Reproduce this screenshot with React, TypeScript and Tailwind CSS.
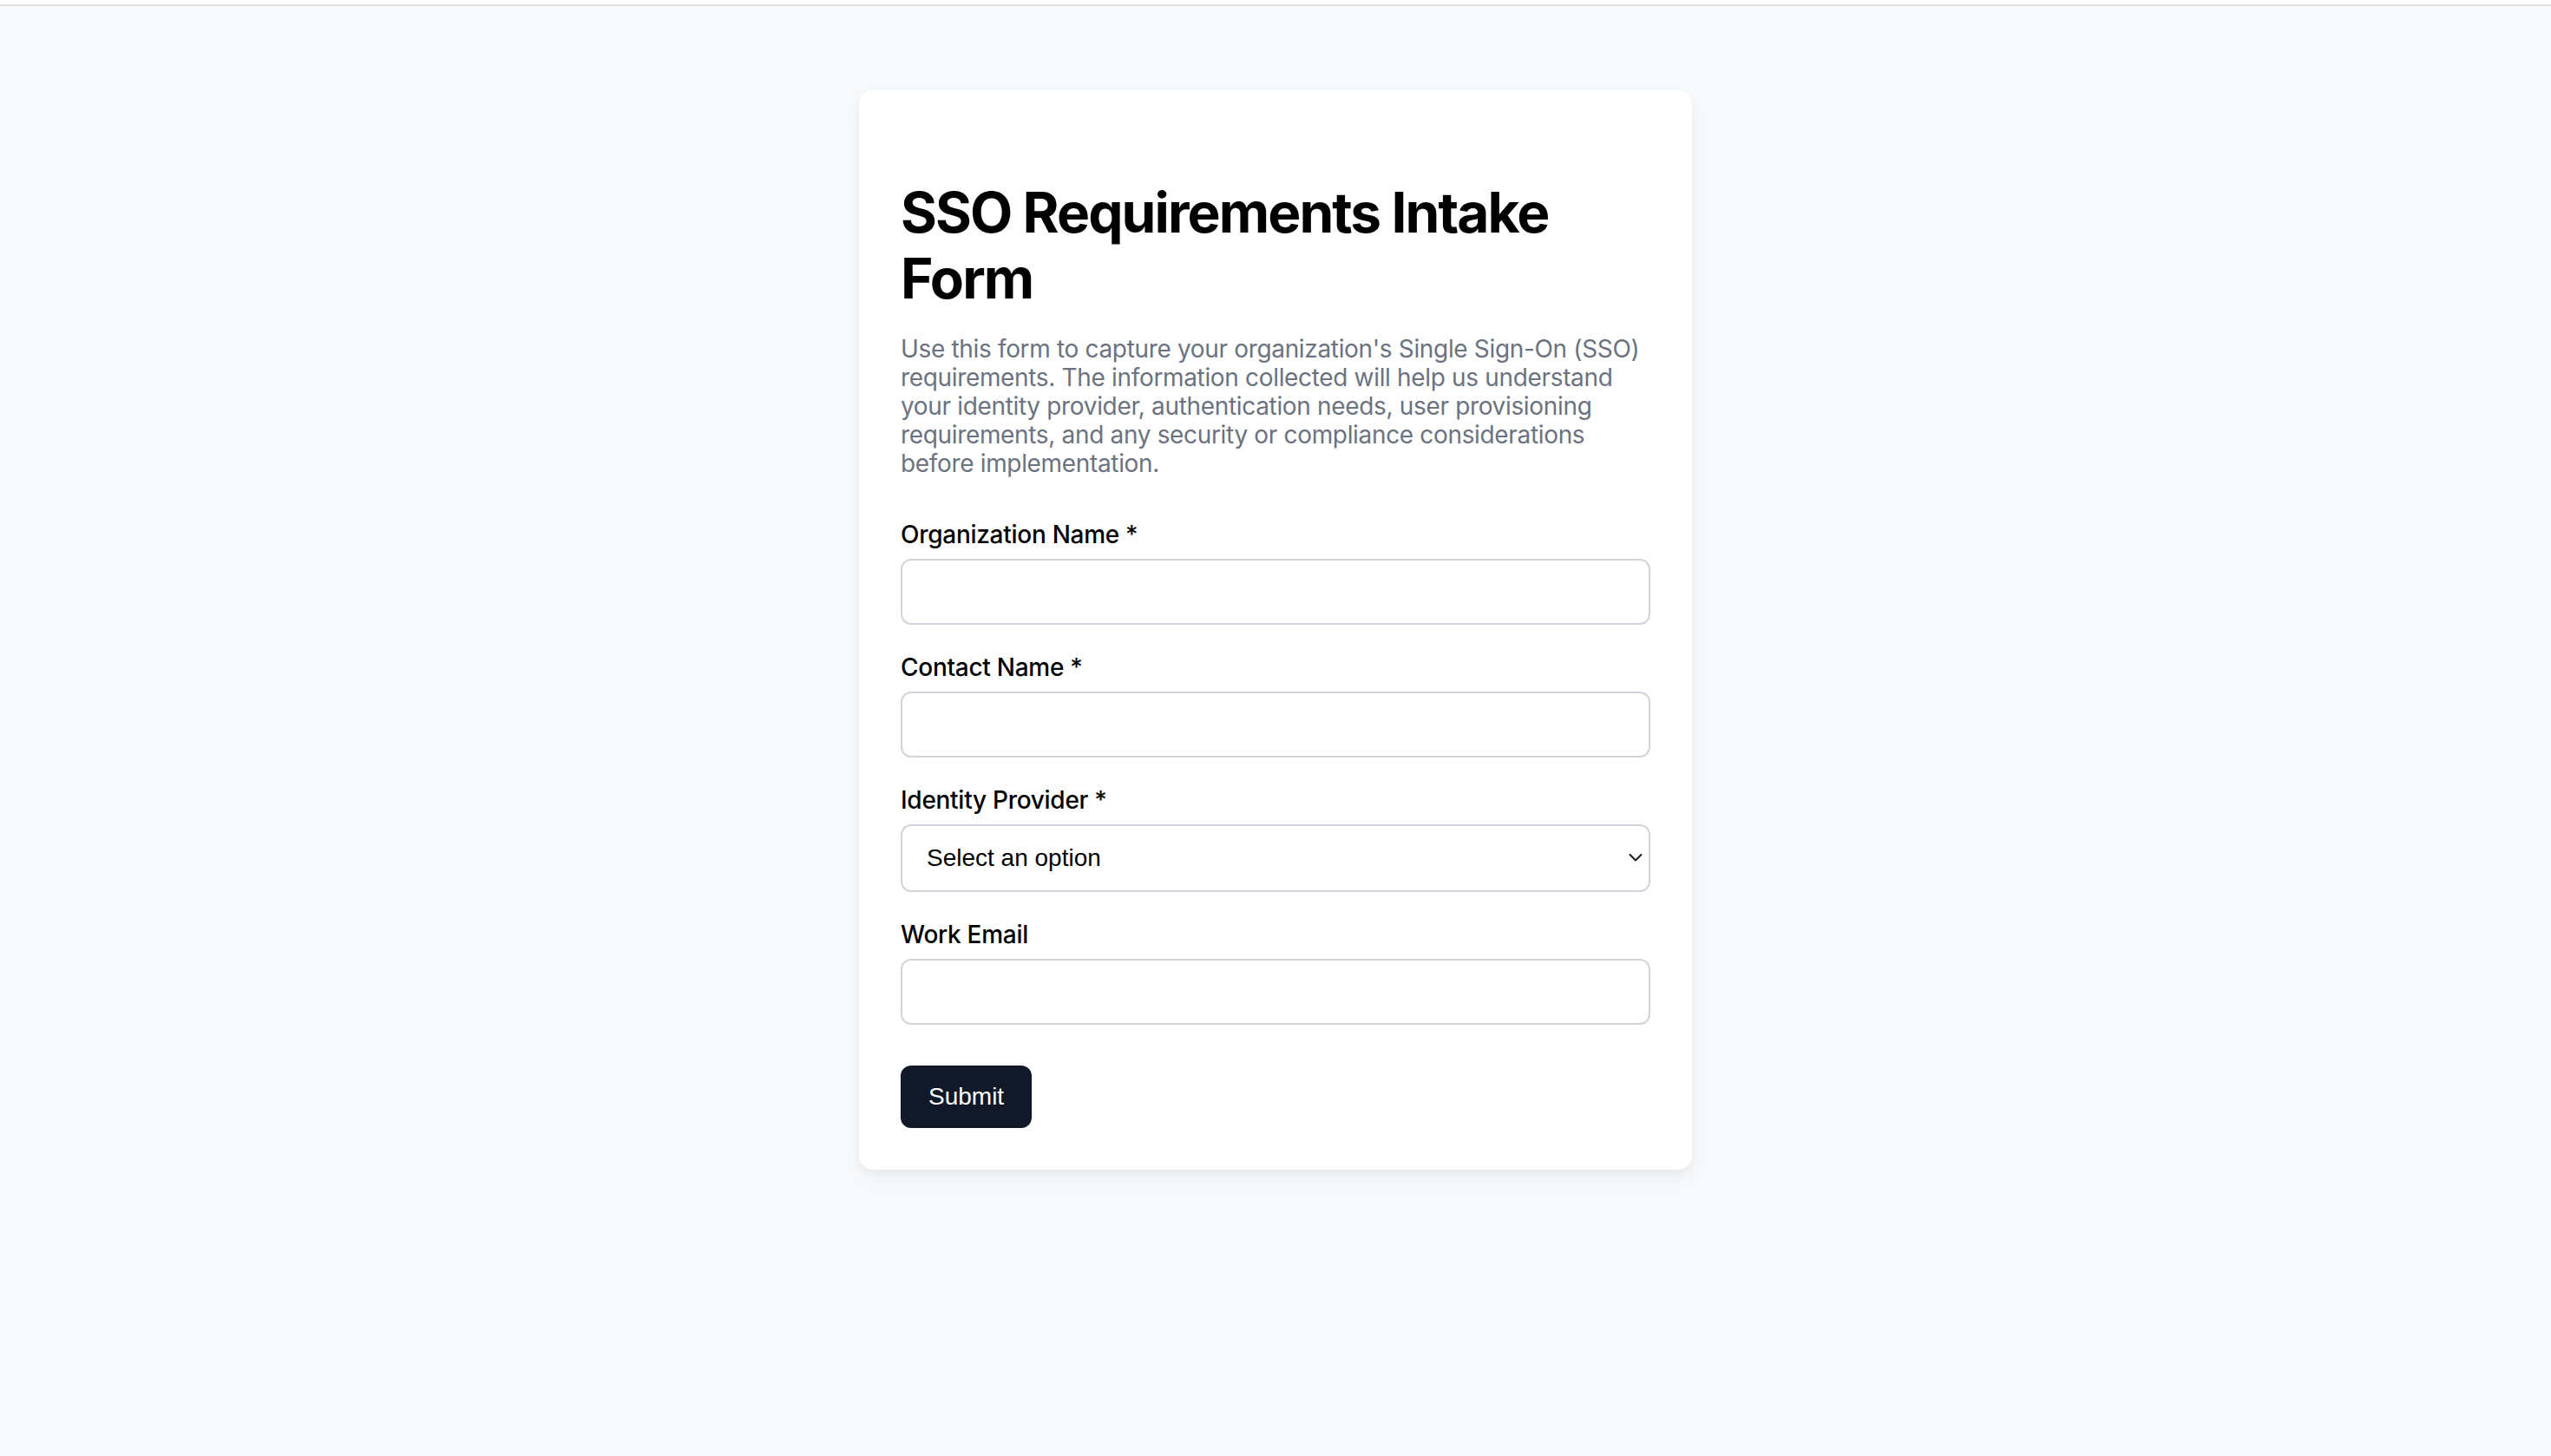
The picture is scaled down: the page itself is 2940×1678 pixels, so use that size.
import React from "react";

function Label({ children }: { children: React.ReactNode }) {
  return (
    <label className="block text-[28px] leading-[34px] font-medium text-black mb-[11px] tracking-[-0.01em] font-['Inter',sans-serif]">
      {children}
    </label>
  );
}

export default function App() {
  return (
    <div className="min-h-screen w-full bg-[#f9fafb] font-['Inter',sans-serif]">
      <div className="h-[7px] w-full bg-white border-b-2 border-[#dfe1e5]" />
      <div className="flex justify-center pt-[97px] pb-[100px]">
        <div className="w-[960px] bg-white rounded-[16px] shadow-[0_4px_10px_rgba(0,0,0,0.04),0_10px_28px_rgba(0,0,0,0.05)] px-[48px] pt-[103px] pb-[48px]">
          <h1 className="text-[64px] leading-[76px] font-bold text-black tracking-[-0.03em] mb-[27px]">
            SSO Requirements Intake Form
          </h1>
          <p className="text-[28px] leading-[33px] text-[#6b7280] tracking-[-0.012em] mb-[48px]">
            Use this form to capture your organization's Single Sign-On (SSO) requirements. The information collected will help us understand your identity provider, authentication needs, user provisioning requirements, and any security or compliance considerations before implementation.
          </p>
          <form className="flex flex-col" onSubmit={(e) => e.preventDefault()}>
            <div className="mb-[32px]">
              <Label>Organization Name *</Label>
              <input
                type="text"
                className="block w-full h-[76px] rounded-[12px] border-2 border-[#d1d5db] bg-white px-[24px] text-[28px] outline-none"
              />
            </div>
            <div className="mb-[32px]">
              <Label>Contact Name *</Label>
              <input
                type="text"
                className="block w-full h-[76px] rounded-[12px] border-2 border-[#d1d5db] bg-white px-[24px] text-[28px] outline-none"
              />
            </div>
            <div className="mb-[32px]">
              <Label>Identity Provider *</Label>
              <div className="relative">
                <select
                  defaultValue=""
                  className="block w-full h-[78px] appearance-none rounded-[12px] border-2 border-[#d1d5db] bg-white pl-[28px] pr-[48px] text-[28px] text-black font-['Liberation_Sans',Arial,sans-serif] outline-none"
                >
                  <option value="">Select an option</option>
                  <option value="okta">Okta</option>
                  <option value="azure">Microsoft Entra ID</option>
                  <option value="google">Google Workspace</option>
                  <option value="other">Other</option>
                </select>
                <svg
                  className="pointer-events-none absolute right-[9px] top-[33px]"
                  width="16"
                  height="11"
                  viewBox="0 0 16 11"
                  fill="none"
                >
                  <path d="M1.5 2 L8 8.5 L14.5 2" stroke="#1a1a1a" strokeWidth="2" strokeLinecap="round" strokeLinejoin="round" />
                </svg>
              </div>
            </div>
            <div>
              <Label>Work Email</Label>
              <input
                type="email"
                className="block w-full h-[76px] rounded-[12px] border-2 border-[#d1d5db] bg-white px-[24px] text-[28px] outline-none"
              />
            </div>
            <div className="mt-[47px]">
              <button
                type="submit"
                className="h-[72px] px-[32px] rounded-[12px] bg-[#111827] text-white text-[28px] leading-[40px] font-['Liberation_Sans',Arial,sans-serif]"
              >
                Submit
              </button>
            </div>
          </form>
        </div>
      </div>
    </div>
  );
}
